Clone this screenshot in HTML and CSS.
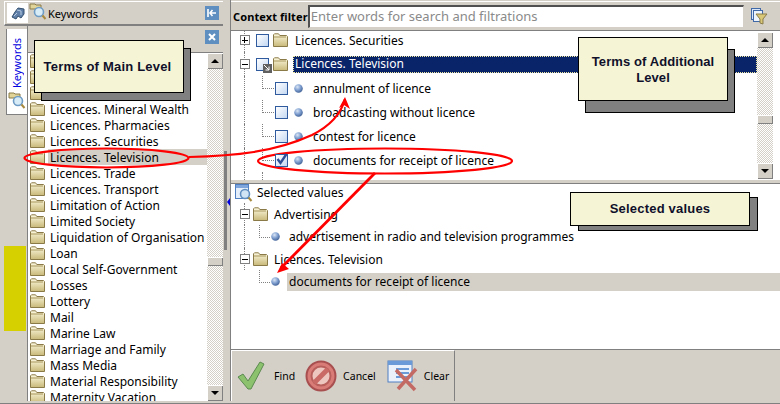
FILE: index.html
```html
<!DOCTYPE html>
<html lang="en">
<head>
  <meta charset="UTF-8" />
  <title>Keywords</title>
  <link rel="stylesheet" href="styles.css">
</head>
<body>

  <svg class="defs" width="0" height="0">
    <defs>
      <linearGradient id="folderFill" x1="0" y1="0" x2="0" y2="1">
        <stop offset="0" stop-color="#fdf9e0" />
        <stop offset="1" stop-color="#c8b878" />
      </linearGradient>
      <radialGradient id="ballFill" cx="0.38" cy="0.32" r="0.75">
        <stop offset="0" stop-color="#dbe6f5" />
        <stop offset="0.5" stop-color="#7f9fd0" />
        <stop offset="1" stop-color="#3a5a90" />
      </radialGradient>
      <symbol id="folder" viewBox="0 0 16 14">
        <path d="M1.500 13.500V1.800l1-1h4l1.300 1.700h6.700l1 1v10z" fill="url(#folderFill)" stroke="#8a7a48" />
        <path d="M2 4h12" stroke="#a8975e" />
      </symbol>
      <symbol id="ball" viewBox="0 0 8 8">
        <circle cx="4" cy="4" r="3.800" fill="url(#ballFill)" />
      </symbol>
      <symbol id="lens" viewBox="0 0 18 18">
        <path d="M1 2h5l1 1h5v4H1z" fill="#e0d498" stroke="#8a7a48" />
        <circle cx="10" cy="10" r="4.500" fill="#d8ecf8" stroke="#6f9cc4" stroke-width="1.600" />
        <path d="M13.500 13.500l3 3.500" stroke="#a88a40" stroke-width="2" />
      </symbol>
    </defs>
  </svg>

  <div class="window">

    <div class="left">
      <div class="topbar">
        <div class="toptab">
          <svg width="16" height="16" viewBox="0 0 16 16"><path d="M2 12l3-5 3-4 6 1v5l-3 4-3-2-2 3z" fill="#5f7fa8" stroke="#34506f" /><path d="M7 5l4 1v4M4 11l3-3" fill="none" stroke="#b8cbe0" /></svg>
        </div>
        <svg class="icon18" width="18" height="18"><use href="#lens" /></svg>
        <span class="toptitle">Keywords</span>
        <span class="bluebtn">
          <svg width="10" height="10" viewBox="0 0 10 10"><path d="M1 1v8M9 5H3M5.500 2L3 5l2.500 3" fill="none" stroke="#fff" stroke-width="1.600" /></svg>
        </span>
      </div>

      <div class="leftbody">
        <div class="sidetabs">
          <div class="sidetab">
            <span class="sidetext">Keywords</span>
            <svg width="18" height="18"><use href="#lens" /></svg>
          </div>
          <div class="marker"></div>
        </div>

        <div class="panel">
          <div class="panelhead">
            <span class="bluebtn">
              <svg width="10" height="10" viewBox="0 0 10 10"><path d="M2 2l6 6M8 2l-6 6" stroke="#fff" stroke-width="2" /></svg>
            </span>
          </div>
          <div class="listwrap">
            <ul class="list">
              <li><svg class="folder"><use href="#folder" /></svg></li>
              <li><svg class="folder"><use href="#folder" /></svg></li>
              <li><svg class="folder"><use href="#folder" /></svg></li>
              <li><svg class="folder"><use href="#folder" /></svg><span>Licences. Mineral Wealth</span></li>
              <li><svg class="folder"><use href="#folder" /></svg><span>Licences. Pharmacies</span></li>
              <li><svg class="folder"><use href="#folder" /></svg><span>Licences. Securities</span></li>
              <li class="current"><svg class="folder"><use href="#folder" /></svg><span>Licences. Television</span></li>
              <li><svg class="folder"><use href="#folder" /></svg><span>Licences. Trade</span></li>
              <li><svg class="folder"><use href="#folder" /></svg><span>Licences. Transport</span></li>
              <li><svg class="folder"><use href="#folder" /></svg><span>Limitation of Action</span></li>
              <li><svg class="folder"><use href="#folder" /></svg><span>Limited Society</span></li>
              <li><svg class="folder"><use href="#folder" /></svg><span>Liquidation of Organisation</span></li>
              <li><svg class="folder"><use href="#folder" /></svg><span>Loan</span></li>
              <li><svg class="folder"><use href="#folder" /></svg><span>Local Self-Government</span></li>
              <li><svg class="folder"><use href="#folder" /></svg><span>Losses</span></li>
              <li><svg class="folder"><use href="#folder" /></svg><span>Lottery</span></li>
              <li><svg class="folder"><use href="#folder" /></svg><span>Mail</span></li>
              <li><svg class="folder"><use href="#folder" /></svg><span>Marine Law</span></li>
              <li><svg class="folder"><use href="#folder" /></svg><span>Marriage and Family</span></li>
              <li><svg class="folder"><use href="#folder" /></svg><span>Mass Media</span></li>
              <li><svg class="folder"><use href="#folder" /></svg><span>Material Responsibility</span></li>
              <li><svg class="folder"><use href="#folder" /></svg><span>Maternity Vacation</span></li>
            </ul>
            <div class="scrollbar">
              <span class="sbtn up"></span>
              <div class="track thumb-left"><span class="thumb"></span></div>
              <span class="sbtn down"></span>
            </div>
          </div>
        </div>
      </div>
    </div>

    <div class="vsplit"><span class="grip"></span><span class="griparrow"></span></div>

    <div class="right">
      <div class="filterbar">
        <label class="filterlabel" for="filter">Context filter</label>
        <input id="filter" class="filterinput" type="text" placeholder="Enter words for search and filtrations" />
        <svg class="filtericon" width="18" height="18" viewBox="0 0 18 18">
          <rect x="1.500" y="1.500" width="9" height="11" fill="#dce8f8" stroke="#3f68a8" />
          <rect x="3.500" y="3.500" width="9" height="11" fill="#eef4fc" stroke="#3f68a8" />
          <path d="M6 7h11l-4 5v5l-3-1v-4z" fill="#d8c878" stroke="#8a7a48" />
        </svg>
      </div>

      <div class="treearea">
        <div class="tree">
          <div class="node top">
            <span class="exp plus"></span><span class="check"></span>
            <svg class="folder"><use href="#folder" /></svg>
            <span class="label">Licences. Securities</span>
          </div>
          <div class="node top">
            <span class="exp"></span>
            <span class="check">
              <span class="badge">
                <svg width="8" height="8" viewBox="0 0 8 8"><path d="M1 1l5 5M6 2.500V6H2.500" fill="none" stroke="#fff" /></svg>
              </span>
            </span>
            <svg class="folder"><use href="#folder" /></svg>
            <span class="label picked">Licences. Television</span>
          </div>
          <div class="node leaf"><span class="check"></span><svg class="ball"><use href="#ball" /></svg><span class="label">annulment of licence</span></div>
          <div class="node leaf"><span class="check"></span><svg class="ball"><use href="#ball" /></svg><span class="label">broadcasting without licence</span></div>
          <div class="node leaf"><span class="check"></span><svg class="ball"><use href="#ball" /></svg><span class="label">contest for licence</span></div>
          <div class="node leaf">
            <span class="check">
              <svg width="13" height="13" viewBox="0 0 13 13"><path d="M2.500 6l3 4 6-9" fill="none" stroke="#2f4f96" stroke-width="2.400" /></svg>
            </span>
            <svg class="ball"><use href="#ball" /></svg><span class="label">documents for receipt of licence</span>
          </div>
          <div class="node tail"></div>
        </div>
        <div class="scrollbar">
          <span class="sbtn up"></span>
          <div class="track thumb-right"><span class="thumb"></span></div>
          <span class="sbtn down"></span>
        </div>
      </div>

      <div class="hsplit"></div>

      <div class="selected">
        <div class="selhead">
          <svg class="icon18" width="18" height="18" viewBox="0 0 18 18">
            <rect x="0.500" y="0.500" width="13" height="14" fill="#e4eefa" stroke="#4f7fc0" />
            <rect x="1" y="1" width="12" height="3" fill="#7fa6dc" />
            <circle cx="10" cy="10" r="4.500" fill="#cfe4f5" stroke="#5f8fc0" stroke-width="1.600" />
            <path d="M13.500 13.500l3 3.500" stroke="#a88a40" stroke-width="2" />
          </svg>
          <span>Selected values</span>
        </div>
        <div class="snode sgroup"><span class="exp"></span><svg class="folder"><use href="#folder" /></svg><span class="label">Advertising</span></div>
        <div class="snode sleaf adv"><svg class="ball"><use href="#ball" /></svg><span class="label">advertisement in radio and television programmes</span></div>
        <div class="snode sgroup"><span class="exp"></span><svg class="folder"><use href="#folder" /></svg><span class="label">Licences. Television</span></div>
        <div class="snode sleaf"><svg class="ball"><use href="#ball" /></svg><span class="label chosen">documents for receipt of licence</span></div>
      </div>

      <div class="actions">
        <div class="actiongroup">
          <button class="action find" type="button">
            <svg width="28" height="30" viewBox="0 0 28 30"><path d="M1 16l5-3 5 7L23 1l4 2-13 25h-3z" fill="#8cc26e" stroke="#5c8a50" /></svg>
            <span>Find</span>
          </button>
          <button class="action cancel" type="button">
            <svg width="32" height="32" viewBox="0 0 32 32"><circle cx="16" cy="16" r="14.500" fill="#d97c78" stroke="#a84f50" stroke-width="2" /><circle cx="16" cy="16" r="9.500" fill="#eec6c0" stroke="#b85f5c" stroke-width="2" /><path d="M9 23L23 9" stroke="#c96a66" stroke-width="5" /></svg>
            <span>Cancel</span>
          </button>
          <button class="action clear" type="button">
            <svg width="32" height="32" viewBox="0 0 32 32"><rect x="1" y="1" width="24" height="21" fill="#eaf1fb" stroke="#4f7fc0" /><rect x="1" y="1" width="24" height="4" fill="#6b9ad8" /><path d="M9 9h13M9 13h13M9 17h13" stroke="#6b9ad8" stroke-width="2" /><path d="M9 10l19 20M29 9L11 29" stroke="#c46a64" stroke-width="3.500" /></svg>
            <span>Clear</span>
          </button>
        </div>
      </div>
    </div>

    <div class="callout main">Terms of Main Level</div>
    <div class="callout extra">Terms of Additional Level</div>
    <div class="callout chosen-note">Selected values</div>

    <svg class="notes" width="780" height="404" viewBox="0 0 780 404">
      <g fill="none" stroke="#f00" stroke-width="2.200">
        <ellipse cx="106.500" cy="158" rx="82" ry="9.500" />
        <ellipse cx="385" cy="161" rx="127" ry="12.500" />
        <path d="M189 157C235 156 275 152 312 135C330 126 341 114 345 99" />
        <path d="M375 173L281 268" stroke-width="2.800" />
      </g>
      <path d="M345 97l-6 11 5-3 6 4zM277 273l12-4-7-6z" fill="#f00" />
    </svg>

  </div>

</body>
</html>
```

FILE: styles.css
```css
* {
  box-sizing: border-box;
}

body {
  margin: 0;
  font-family: "Noto Sans", sans-serif;
  font-size: 12px;
  color: #000;
  background-color: #d4d0c8;
}

.defs {
  display: block;
  height: 0;
}

.window {
  position: relative;
  display: flex;
  width: 780px;
  height: 404px;
  padding-bottom: 3px;
  background-color: #d4d0c8;
  box-shadow: inset 0 -1px 0 #808080;
  overflow: hidden;
}

/* left pane */

.left {
  display: flex;
  flex-direction: column;
  width: 223px;
  padding-left: 4px;
}

.topbar {
  display: flex;
  align-items: center;
  height: 25px;
  margin-top: 1px;
  padding: 2px 4px 2px 2px;
  border-top: 1px solid #fff;
  border-left: 1px solid #fff;
  border-bottom: 2px solid #808080;
}

.toptab {
  display: flex;
  align-items: center;
  justify-content: center;
  width: 21px;
  height: 20px;
  background-color: #fff;
}

.icon18 {
  flex: none;
}

.topbar .icon18 {
  margin: -4px 1px 0 1px;
}

.toptitle {
  flex: 1;
  font-size: 11px;
}

.bluebtn {
  display: flex;
  align-items: center;
  justify-content: center;
  width: 14px;
  height: 14px;
  background-color: #5f8fc0;
}

.leftbody {
  display: flex;
  flex: 1;
  min-height: 0;
}

.sidetabs {
  width: 23px;
  padding-top: 3px;
}

.sidetab {
  display: flex;
  flex-direction: column;
  align-items: center;
  gap: 3px;
  width: 21px;
  height: 86px;
  margin-left: 2px;
  padding-top: 9px;
  background-color: #fff;
  border-left: 1px solid #808080;
  border-bottom: 1px solid #808080;
}

.sidetext {
  writing-mode: vertical-rl;
  transform: rotate(180deg);
  font-size: 11px;
  line-height: 14px;
  color: #0000e0;
}

.marker {
  width: 22px;
  height: 85px;
  margin-top: 131px;
  background-color: #d6d000;
}

.panel {
  display: flex;
  flex-direction: column;
  flex: 1;
  min-width: 0;
  border-left: 1px solid #808080;
}

.panelhead {
  display: flex;
  flex: none;
  justify-content: flex-end;
  height: 27px;
  padding: 4px 4px 0 0;
  border-bottom: 1px solid #808080;
}

.listwrap {
  display: flex;
  flex: 1;
  min-height: 0;
}

.list {
  flex: 1;
  min-width: 0;
  margin: 0;
  padding: 0;
  list-style: none;
  background-color: #fff;
  overflow: hidden;
}

.list li {
  display: flex;
  align-items: center;
  height: 16px;
  white-space: nowrap;
}

.list .folder {
  margin: 0 3px 0 1px;
}

.list span {
  flex: 1;
  height: 16px;
  padding: 1px 0 0 2px;
  line-height: 16px;
}

.list .current span {
  background-color: #d4d0c8;
}

.folder {
  flex: none;
  width: 16px;
  height: 14px;
}

/* scrollbars */

.scrollbar {
  display: flex;
  flex-direction: column;
  flex: none;
  width: 16px;
}

.treearea .scrollbar {
  padding: 1px 0;
}

.sbtn {
  display: flex;
  align-items: center;
  justify-content: center;
  flex: none;
  height: 16px;
  background-color: #d4d0c8;
  box-shadow: inset 1px 1px 0 #fff, inset -1px -1px 0 #808080;
}

.sbtn::after {
  content: "";
  border-left: 4px solid transparent;
  border-right: 4px solid transparent;
}

.sbtn.up::after {
  border-bottom: 4px solid #000;
}

.sbtn.down::after {
  border-top: 4px solid #000;
}

.track {
  flex: 1;
  background: conic-gradient(#fff 25%, #d4d0c8 0 50%, #fff 0 75%, #d4d0c8 0) 0 0 / 2px 2px;
}

.thumb {
  display: block;
  height: 9px;
  background-color: #d4d0c8;
  box-shadow: inset 1px 1px 0 #fff, inset -1px -1px 0 #808080;
}

.thumb-left {
  padding-top: 188px;
}

.thumb-right {
  padding-top: 67px;
}

/* splitter */

.vsplit {
  display: flex;
  flex-direction: column;
  flex: none;
  width: 7px;
  padding-top: 151px;
}

.grip {
  width: 3px;
  height: 99px;
  margin-left: 1px;
  background-color: #808080;
}

.griparrow {
  align-self: flex-end;
  margin-top: -52px;
  border-top: 4px solid transparent;
  border-bottom: 4px solid transparent;
  border-right: 3px solid #0000e0;
}

/* right pane */

.right {
  display: flex;
  flex-direction: column;
  flex: 1;
  min-width: 0;
  border-left: 1px solid #808080;
}

.filterbar {
  display: flex;
  align-items: center;
  flex: none;
  height: 30px;
  margin-top: 1px;
  padding: 0 12px 0 2px;
  border-top: 1px solid #fff;
  border-bottom: 1px solid #808080;
}

.filterlabel {
  width: 75px;
  font-size: 11px;
  font-weight: bold;
  letter-spacing: 0.1px;
  white-space: nowrap;
}

.filterinput {
  width: 437px;
  height: 23px;
  padding: 0 1px 2px;
  font-family: inherit;
  font-size: 13px;
  background-color: #fff;
  border: 1px solid #d4d0c8;
  border-top: 2px solid #505050;
  border-left: 2px solid #505050;
}

.filterinput::placeholder {
  color: #8a8a8a;
}

.filtericon {
  margin-left: 6px;
}

.treearea {
  display: flex;
  flex: none;
  height: 149px;
  padding-right: 7px;
  background-color: #fff;
}

.tree {
  flex: 1;
  min-width: 0;
  overflow: hidden;
}

.node {
  position: relative;
  display: flex;
  align-items: center;
  height: 24px;
}

.node:first-child {
  margin-top: -3px;
}

.node .label {
  padding: 0 2px;
  white-space: nowrap;
}

.node.top {
  padding-left: 9px;
}

.node.top .check {
  margin-left: 6px;
}

.node.top .folder {
  margin: 0 5px 0 3px;
}

.node.top::before,
.node.leaf::before,
.node.leaf::after,
.node.tail::before,
.node.tail::after {
  content: "";
  position: absolute;
  top: 0;
}

.node.top::before,
.node.leaf::before,
.node.tail::before {
  left: 13px;
  height: 24px;
  border-left: 1px dotted #808080;
}

.node.leaf::after {
  left: 31px;
  width: 11px;
  height: 12px;
  border-left: 1px dotted #808080;
  border-bottom: 1px dotted #808080;
}

.node.tail::after {
  left: 31px;
  height: 24px;
  border-left: 1px dotted #808080;
}

.node.leaf {
  padding-left: 44px;
}

.node.leaf .ball {
  margin: 0 8px 0 6px;
}

.picked {
  flex: 1;
  height: 17px;
  line-height: 16px;
  color: #fff;
  background-color: #0a246a;
  outline: 1px dotted #f0e8a0;
  outline-offset: -1px;
}

.exp {
  position: relative;
  z-index: 1;
  flex: none;
  width: 10px;
  height: 10px;
  background-color: #fff;
  background-image: linear-gradient(#000, #000);
  background-size: 6px 1px;
  background-position: center;
  background-repeat: no-repeat;
  border: 1px solid #808080;
}

.exp.plus::after {
  content: "";
  display: block;
  width: 1px;
  height: 6px;
  margin: 1px 0 0 3px;
  background-color: #000;
}

.check {
  position: relative;
  z-index: 1;
  display: block;
  flex: none;
  width: 13px;
  height: 13px;
  background: linear-gradient(135deg, #fff, #c4d8f2);
  border: 1px solid #2f5a9e;
  line-height: 0;
}

.check svg {
  margin: -2px 0 0 -1px;
}

.badge {
  position: absolute;
  right: -4px;
  bottom: -3px;
  width: 9px;
  height: 9px;
  background-color: #606060;
}

.badge svg {
  margin: 0;
}

.ball {
  flex: none;
  width: 9px;
  height: 9px;
}

.hsplit {
  flex: none;
  height: 4px;
  background-color: #d4d0c8;
  border-bottom: 1px solid #808080;
}

.selected {
  flex: 1;
  min-height: 0;
  background-color: #fff;
}

.selhead {
  display: flex;
  align-items: center;
  gap: 4px;
  height: 19px;
  padding: 0 0 2px 4px;
}

.snode {
  position: relative;
  display: flex;
  align-items: center;
  white-space: nowrap;
}

.snode::before {
  content: "";
  position: absolute;
  top: 0;
}

.sgroup {
  height: 22px;
  padding-left: 9px;
}

.sgroup::before {
  left: 13px;
  height: 22px;
  border-left: 1px dotted #808080;
}

.sgroup .folder {
  margin: 0 4px 0 2px;
}

.sleaf {
  height: 23px;
  padding-left: 40px;
}

.sleaf::before {
  left: 28px;
  width: 10px;
  height: 12px;
  border-left: 1px dotted #808080;
  border-bottom: 1px dotted #808080;
}

.sleaf.adv::after {
  content: "";
  position: absolute;
  left: 13px;
  top: 0;
  height: 23px;
  border-left: 1px dotted #808080;
}

.sleaf .ball {
  margin-right: 7px;
}

.snode .label {
  padding: 0 2px;
}

.chosen {
  flex: 1;
  height: 18px;
  line-height: 17px;
  background-color: #d4d0c8;
}

.actions {
  flex: none;
  height: 52px;
  border-top: 1px solid #808080;
}

.actiongroup {
  display: flex;
  align-items: center;
  width: 224px;
  height: 100%;
  padding-left: 5px;
  border-left: 1px solid #fff;
  border-right: 1px solid #808080;
  border-top: 1px solid #fff;
}

.action {
  display: flex;
  align-items: center;
  padding: 0;
  font-family: inherit;
  font-size: 10.5px;
  color: #000;
  background: none;
  border: none;
}

.action.find {
  gap: 9px;
  margin-right: 10px;
}

.action.cancel {
  gap: 6px;
  margin-right: 11px;
}

.action.clear {
  gap: 5px;
}

/* notes over the screenshot */

.callout {
  position: absolute;
  display: flex;
  align-items: center;
  justify-content: center;
  font-family: "Liberation Sans", Arial, sans-serif;
  font-size: 13px;
  font-weight: bold;
  letter-spacing: 0.2px;
  line-height: 16px;
  text-align: center;
  color: #10102a;
  background-color: #f5f5d6;
  border: 1px solid #000;
  box-shadow: 7px 8px 0 -1px #808080, 7px 8px 0 0 #000;
}

.callout.main {
  left: 34px;
  top: 40px;
  width: 150px;
  height: 53px;
  padding-right: 3px;
}

.callout.extra {
  left: 578px;
  top: 37px;
  width: 150px;
  height: 64px;
  padding: 1px 8px 0;
  letter-spacing: 0.1px;
  box-shadow: 7px 12px 0 -1px #808080, 7px 12px 0 0 #000;
}

.callout.chosen-note {
  left: 570px;
  top: 192px;
  width: 180px;
  height: 34px;
  box-shadow: 8px 5px 0 -1px #808080, 8px 5px 0 0 #000;
}

.notes {
  position: absolute;
  left: 0;
  top: 0;
  pointer-events: none;
}
```
